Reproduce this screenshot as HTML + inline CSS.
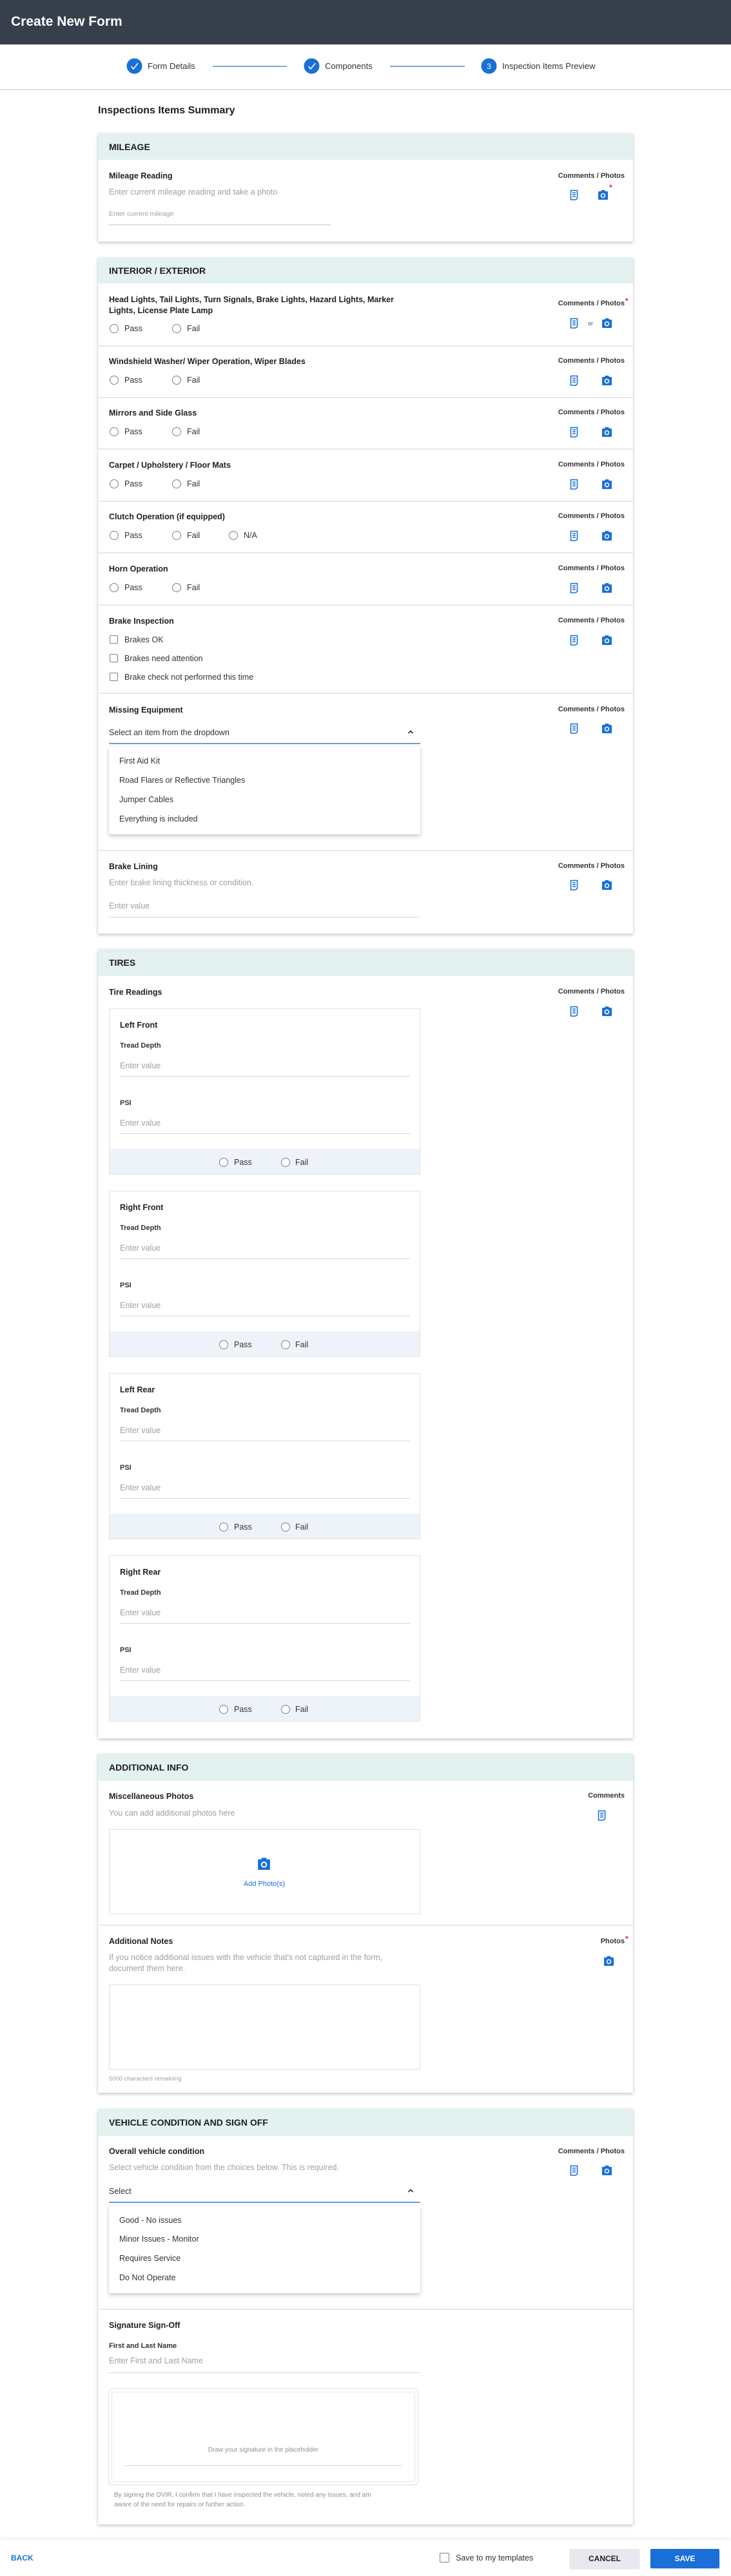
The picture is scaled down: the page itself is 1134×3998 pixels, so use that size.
<!DOCTYPE html>
<html><head><meta charset="utf-8">
<style>
*{box-sizing:border-box;margin:0;padding:0}
body{width:1134px;height:3998px;position:relative;background:#fff;font-family:"Liberation Sans",Arial,sans-serif;color:#222;overflow:hidden}
.a{position:absolute;white-space:nowrap;line-height:16px}
.hdr{position:absolute;left:0;top:0;width:1134px;height:69px;background:#373e4c}
.card{position:absolute;left:152px;width:830px;background:#fff;box-shadow:0 2px 5px rgba(0,0,0,.22),0 0 2px rgba(0,0,0,.08)}
.band{position:absolute;left:0;top:0;width:100%;height:41px;background:#e4f1f1}
.st{font-size:14px;font-weight:bold;color:#1d1d1d}
.t{font-size:12.5px;font-weight:bold;color:#1f1f1f}
.d{font-size:12.5px;color:#9ba1aa}
.ph{font-size:12.5px;color:#9ba1aa}
.cp{font-size:11px;font-weight:bold;color:#333;right:165px;text-align:right}
.lbl{font-size:12.5px;color:#333}
.sep{position:absolute;left:152px;width:830px;height:2px;background:#e6e8ec}
.ul{position:absolute;height:1px;background:#d5d8de}
.rad{position:absolute;width:14px;height:14px;border:1.4px solid #7b7f86;border-radius:50%;background:#fff}
.chk{position:absolute;width:13px;height:13px;border:1.4px solid #7b7f86;border-radius:2px;background:#fff}
.ico{position:absolute}
.menu{position:absolute;left:169px;width:483px;background:#fff;box-shadow:0 3px 6px rgba(0,0,0,.2),0 0 2px rgba(0,0,0,.1)}
.tire{position:absolute;left:169px;width:483px;height:258px;border:1px solid #dfe2e6;background:#fff}
.tband{position:absolute;left:0;bottom:0;width:100%;height:39px;background:#eef3f9}
.req{color:#e02020;font-weight:bold}
</style></head><body>

<div class="hdr"></div>
<div class="a" style="left:17px;top:22px;font-size:21px;line-height:24px;font-weight:bold;color:#fff">Create New Form</div>

<!-- stepper -->
<svg class="ico" style="left:196px;top:90px" width="25" height="25"><circle cx="12.5" cy="12.5" r="12" fill="#1a6fd8"/><path d="M7.5 13l3.5 4 7-9" fill="none" stroke="#fff" stroke-width="1.6"/></svg>
<div class="a" style="left:229px;top:95px;font-size:13px;color:#333">Form Details</div>
<div style="position:absolute;left:330px;top:102px;width:115px;height:2px;background:#8aa6cc"></div>
<svg class="ico" style="left:471px;top:90px" width="25" height="25"><circle cx="12.5" cy="12.5" r="12" fill="#1a6fd8"/><path d="M7.5 13l3.5 4 7-9" fill="none" stroke="#fff" stroke-width="1.6"/></svg>
<div class="a" style="left:504px;top:95px;font-size:13px;color:#333">Components</div>
<div style="position:absolute;left:605px;top:102px;width:116px;height:2px;background:#8aa6cc"></div>
<svg class="ico" style="left:746px;top:90px" width="25" height="25"><circle cx="12.5" cy="12.5" r="12" fill="#1a6fd8"/><text x="12.5" y="17" font-size="12" fill="#fff" text-anchor="middle" font-family="Liberation Sans">3</text></svg>
<div class="a" style="left:779px;top:95px;font-size:13px;color:#333">Inspection Items Preview</div>
<div style="position:absolute;left:0;top:138px;width:1134px;height:2px;background:#e3e5e8"></div>

<div class="a" style="left:152px;top:162px;font-size:16px;line-height:20px;font-weight:bold;color:#1d1d1d">Inspections Items Summary</div>

<!-- MILEAGE -->
<div class="card" style="top:207px;height:168px"><div class="band"></div></div>
<div class="a st" style="left:169px;top:220px">MILEAGE</div>
<div class="a t" style="left:169px;top:265px">Mileage Reading</div>
<div class="a d" style="left:169px;top:290px">Enter current mileage reading and take a photo</div>
<div class="a ph" style="left:169px;top:324px;font-size:10.5px">Enter current mileage</div>
<div class="ul" style="left:168px;top:348px;width:345px;height:2px;background:#dfe1e5"></div>
<div class="a cp" style="top:265px">Comments / Photos</div>
<svg class="ico" style="left:884px;top:294px" width="13" height="17" viewBox="0 0 13 17"><path d="M1.5 1.5h10v12.5l-2.5 2h-7.5z" fill="none" stroke="#1a6fd8" stroke-width="1.6"/><path d="M4 5h5M4 8h5M4 11h5" stroke="#1a6fd8" stroke-width="1.4"/></svg>
<svg class="ico" style="left:928px;top:294px" width="15" height="16" viewBox="0 0 15 16"><path d="M5 1h5l1 2h3a1 1 0 0 1 1 1v11a1 1 0 0 1-1 1H1a1 1 0 0 1-1-1V4a1 1 0 0 1 1-1h3z" fill="#1a6fd8"/><circle cx="7.5" cy="9.5" r="3" fill="none" stroke="#fff" stroke-width="1.6"/></svg>
<div class="a req" style="left:945px;top:283px;font-size:12px">*</div>

<!-- INTERIOR / EXTERIOR -->
<div class="card" style="top:400px;height:1049px"><div class="band" style="height:40px"></div></div>
<div class="a st" style="left:169px;top:412px">INTERIOR / EXTERIOR</div>

<!-- row1 -->
<div class="a t" style="left:169px;top:457px;line-height:17px">Head Lights, Tail Lights, Turn Signals, Brake Lights, Hazard Lights, Marker<br>Lights, License Plate Lamp</div>
<div class="rad" style="left:170px;top:503px"></div><div class="a lbl" style="left:193px;top:502px">Pass</div>
<div class="rad" style="left:267px;top:503px"></div><div class="a lbl" style="left:290px;top:502px">Fail</div>
<div class="a cp" style="top:463px">Comments / Photos</div><div class="a req" style="left:970px;top:459px;font-size:12px">*</div>
<svg class="ico" style="left:884px;top:493px" width="13" height="17" viewBox="0 0 13 17"><path d="M1.5 1.5h10v12.5l-2.5 2h-7.5z" fill="none" stroke="#1a6fd8" stroke-width="1.6"/><path d="M4 5h5M4 8h5M4 11h5" stroke="#1a6fd8" stroke-width="1.4"/></svg>
<div class="a" style="left:912px;top:494px;font-size:9px;color:#555">or</div>
<svg class="ico" style="left:934px;top:493px" width="15" height="16" viewBox="0 0 15 16"><path d="M5 1h5l1 2h3a1 1 0 0 1 1 1v11a1 1 0 0 1-1 1H1a1 1 0 0 1-1-1V4a1 1 0 0 1 1-1h3z" fill="#1a6fd8"/><circle cx="7.5" cy="9.5" r="3" fill="none" stroke="#fff" stroke-width="1.6"/></svg>
<div class="sep" style="top:536px"></div>

<!-- generic rows -->
<div class="a t" style="left:169px;top:553px">Windshield Washer/ Wiper Operation, Wiper Blades</div>
<div class="rad" style="left:170px;top:583px"></div><div class="a lbl" style="left:193px;top:582px">Pass</div>
<div class="rad" style="left:267px;top:583px"></div><div class="a lbl" style="left:290px;top:582px">Fail</div>
<div class="a cp" style="top:552px">Comments / Photos</div>
<svg class="ico" style="left:884px;top:582px" width="13" height="17" viewBox="0 0 13 17"><path d="M1.5 1.5h10v12.5l-2.5 2h-7.5z" fill="none" stroke="#1a6fd8" stroke-width="1.6"/><path d="M4 5h5M4 8h5M4 11h5" stroke="#1a6fd8" stroke-width="1.4"/></svg>
<svg class="ico" style="left:934px;top:582px" width="15" height="16" viewBox="0 0 15 16"><path d="M5 1h5l1 2h3a1 1 0 0 1 1 1v11a1 1 0 0 1-1 1H1a1 1 0 0 1-1-1V4a1 1 0 0 1 1-1h3z" fill="#1a6fd8"/><circle cx="7.5" cy="9.5" r="3" fill="none" stroke="#fff" stroke-width="1.6"/></svg>
<div class="sep" style="top:616px"></div>

<div class="a t" style="left:169px;top:633px">Mirrors and Side Glass</div>
<div class="rad" style="left:170px;top:663px"></div><div class="a lbl" style="left:193px;top:662px">Pass</div>
<div class="rad" style="left:267px;top:663px"></div><div class="a lbl" style="left:290px;top:662px">Fail</div>
<div class="a cp" style="top:632px">Comments / Photos</div>
<svg class="ico" style="left:884px;top:662px" width="13" height="17" viewBox="0 0 13 17"><path d="M1.5 1.5h10v12.5l-2.5 2h-7.5z" fill="none" stroke="#1a6fd8" stroke-width="1.6"/><path d="M4 5h5M4 8h5M4 11h5" stroke="#1a6fd8" stroke-width="1.4"/></svg>
<svg class="ico" style="left:934px;top:662px" width="15" height="16" viewBox="0 0 15 16"><path d="M5 1h5l1 2h3a1 1 0 0 1 1 1v11a1 1 0 0 1-1 1H1a1 1 0 0 1-1-1V4a1 1 0 0 1 1-1h3z" fill="#1a6fd8"/><circle cx="7.5" cy="9.5" r="3" fill="none" stroke="#fff" stroke-width="1.6"/></svg>
<div class="sep" style="top:696px"></div>

<div class="a t" style="left:169px;top:714px">Carpet / Upholstery / Floor Mats</div>
<div class="rad" style="left:170px;top:744px"></div><div class="a lbl" style="left:193px;top:743px">Pass</div>
<div class="rad" style="left:267px;top:744px"></div><div class="a lbl" style="left:290px;top:743px">Fail</div>
<div class="a cp" style="top:713px">Comments / Photos</div>
<svg class="ico" style="left:884px;top:743px" width="13" height="17" viewBox="0 0 13 17"><path d="M1.5 1.5h10v12.5l-2.5 2h-7.5z" fill="none" stroke="#1a6fd8" stroke-width="1.6"/><path d="M4 5h5M4 8h5M4 11h5" stroke="#1a6fd8" stroke-width="1.4"/></svg>
<svg class="ico" style="left:934px;top:743px" width="15" height="16" viewBox="0 0 15 16"><path d="M5 1h5l1 2h3a1 1 0 0 1 1 1v11a1 1 0 0 1-1 1H1a1 1 0 0 1-1-1V4a1 1 0 0 1 1-1h3z" fill="#1a6fd8"/><circle cx="7.5" cy="9.5" r="3" fill="none" stroke="#fff" stroke-width="1.6"/></svg>
<div class="sep" style="top:777px"></div>

<div class="a t" style="left:169px;top:794px">Clutch Operation (if equipped)</div>
<div class="rad" style="left:170px;top:824px"></div><div class="a lbl" style="left:193px;top:823px">Pass</div>
<div class="rad" style="left:267px;top:824px"></div><div class="a lbl" style="left:290px;top:823px">Fail</div>
<div class="rad" style="left:355px;top:824px"></div><div class="a lbl" style="left:378px;top:823px">N/A</div>
<div class="a cp" style="top:793px">Comments / Photos</div>
<svg class="ico" style="left:884px;top:823px" width="13" height="17" viewBox="0 0 13 17"><path d="M1.5 1.5h10v12.5l-2.5 2h-7.5z" fill="none" stroke="#1a6fd8" stroke-width="1.6"/><path d="M4 5h5M4 8h5M4 11h5" stroke="#1a6fd8" stroke-width="1.4"/></svg>
<svg class="ico" style="left:934px;top:823px" width="15" height="16" viewBox="0 0 15 16"><path d="M5 1h5l1 2h3a1 1 0 0 1 1 1v11a1 1 0 0 1-1 1H1a1 1 0 0 1-1-1V4a1 1 0 0 1 1-1h3z" fill="#1a6fd8"/><circle cx="7.5" cy="9.5" r="3" fill="none" stroke="#fff" stroke-width="1.6"/></svg>
<div class="sep" style="top:857px"></div>

<div class="a t" style="left:169px;top:875px">Horn Operation</div>
<div class="rad" style="left:170px;top:905px"></div><div class="a lbl" style="left:193px;top:904px">Pass</div>
<div class="rad" style="left:267px;top:905px"></div><div class="a lbl" style="left:290px;top:904px">Fail</div>
<div class="a cp" style="top:874px">Comments / Photos</div>
<svg class="ico" style="left:884px;top:904px" width="13" height="17" viewBox="0 0 13 17"><path d="M1.5 1.5h10v12.5l-2.5 2h-7.5z" fill="none" stroke="#1a6fd8" stroke-width="1.6"/><path d="M4 5h5M4 8h5M4 11h5" stroke="#1a6fd8" stroke-width="1.4"/></svg>
<svg class="ico" style="left:934px;top:904px" width="15" height="16" viewBox="0 0 15 16"><path d="M5 1h5l1 2h3a1 1 0 0 1 1 1v11a1 1 0 0 1-1 1H1a1 1 0 0 1-1-1V4a1 1 0 0 1 1-1h3z" fill="#1a6fd8"/><circle cx="7.5" cy="9.5" r="3" fill="none" stroke="#fff" stroke-width="1.6"/></svg>
<div class="sep" style="top:938px"></div>

<!-- brake inspection -->
<div class="a t" style="left:169px;top:956px">Brake Inspection</div>
<div class="chk" style="left:170px;top:986px"></div><div class="a lbl" style="left:193px;top:985px">Brakes OK</div>
<div class="chk" style="left:170px;top:1015px"></div><div class="a lbl" style="left:193px;top:1014px">Brakes need attention</div>
<div class="chk" style="left:170px;top:1044px"></div><div class="a lbl" style="left:193px;top:1043px">Brake check not performed this time</div>
<div class="a cp" style="top:955px">Comments / Photos</div>
<svg class="ico" style="left:884px;top:985px" width="13" height="17" viewBox="0 0 13 17"><path d="M1.5 1.5h10v12.5l-2.5 2h-7.5z" fill="none" stroke="#1a6fd8" stroke-width="1.6"/><path d="M4 5h5M4 8h5M4 11h5" stroke="#1a6fd8" stroke-width="1.4"/></svg>
<svg class="ico" style="left:934px;top:985px" width="15" height="16" viewBox="0 0 15 16"><path d="M5 1h5l1 2h3a1 1 0 0 1 1 1v11a1 1 0 0 1-1 1H1a1 1 0 0 1-1-1V4a1 1 0 0 1 1-1h3z" fill="#1a6fd8"/><circle cx="7.5" cy="9.5" r="3" fill="none" stroke="#fff" stroke-width="1.6"/></svg>
<div class="sep" style="top:1075px"></div>

<!-- missing equipment -->
<div class="a t" style="left:169px;top:1094px">Missing Equipment</div>
<div class="a lbl" style="left:169px;top:1129px">Select an item from the dropdown</div>
<svg class="ico" style="left:632px;top:1132px" width="10" height="8"><path d="M1.5 6l3.5-3.5 3.5 3.5" fill="none" stroke="#222" stroke-width="1.6"/></svg>
<div class="ul" style="left:169px;top:1153px;width:483px;height:2px;background:#6f9ad6"></div>
<div class="menu" style="top:1159px;height:136px"></div>
<div class="a lbl" style="left:185px;top:1173px">First Aid Kit</div>
<div class="a lbl" style="left:185px;top:1203px">Road Flares or Reflective Triangles</div>
<div class="a lbl" style="left:185px;top:1233px">Jumper Cables</div>
<div class="a lbl" style="left:185px;top:1263px">Everything is included</div>
<div class="a cp" style="top:1093px">Comments / Photos</div>
<svg class="ico" style="left:884px;top:1122px" width="13" height="17" viewBox="0 0 13 17"><path d="M1.5 1.5h10v12.5l-2.5 2h-7.5z" fill="none" stroke="#1a6fd8" stroke-width="1.6"/><path d="M4 5h5M4 8h5M4 11h5" stroke="#1a6fd8" stroke-width="1.4"/></svg>
<svg class="ico" style="left:934px;top:1122px" width="15" height="16" viewBox="0 0 15 16"><path d="M5 1h5l1 2h3a1 1 0 0 1 1 1v11a1 1 0 0 1-1 1H1a1 1 0 0 1-1-1V4a1 1 0 0 1 1-1h3z" fill="#1a6fd8"/><circle cx="7.5" cy="9.5" r="3" fill="none" stroke="#fff" stroke-width="1.6"/></svg>
<div class="sep" style="top:1319px"></div>

<!-- brake lining -->
<div class="a t" style="left:169px;top:1337px">Brake Lining</div>
<div class="a d" style="left:169px;top:1362px">Enter brake lining thickness or condition.</div>
<div class="a ph" style="left:169px;top:1398px">Enter value</div>
<div class="ul" style="left:169px;top:1423px;width:483px"></div>
<div class="a cp" style="top:1336px">Comments / Photos</div>
<svg class="ico" style="left:884px;top:1365px" width="13" height="17" viewBox="0 0 13 17"><path d="M1.5 1.5h10v12.5l-2.5 2h-7.5z" fill="none" stroke="#1a6fd8" stroke-width="1.6"/><path d="M4 5h5M4 8h5M4 11h5" stroke="#1a6fd8" stroke-width="1.4"/></svg>
<svg class="ico" style="left:934px;top:1365px" width="15" height="16" viewBox="0 0 15 16"><path d="M5 1h5l1 2h3a1 1 0 0 1 1 1v11a1 1 0 0 1-1 1H1a1 1 0 0 1-1-1V4a1 1 0 0 1 1-1h3z" fill="#1a6fd8"/><circle cx="7.5" cy="9.5" r="3" fill="none" stroke="#fff" stroke-width="1.6"/></svg>

<!-- TIRES -->
<div class="card" style="top:1473px;height:1225px"><div class="band" style="height:42px"></div></div>
<div class="a st" style="left:169px;top:1486px">TIRES</div>
<div class="a t" style="left:169px;top:1532px">Tire Readings</div>
<div class="a cp" style="top:1531px">Comments / Photos</div>
<svg class="ico" style="left:884px;top:1561px" width="13" height="17" viewBox="0 0 13 17"><path d="M1.5 1.5h10v12.5l-2.5 2h-7.5z" fill="none" stroke="#1a6fd8" stroke-width="1.6"/><path d="M4 5h5M4 8h5M4 11h5" stroke="#1a6fd8" stroke-width="1.4"/></svg>
<svg class="ico" style="left:934px;top:1561px" width="15" height="16" viewBox="0 0 15 16"><path d="M5 1h5l1 2h3a1 1 0 0 1 1 1v11a1 1 0 0 1-1 1H1a1 1 0 0 1-1-1V4a1 1 0 0 1 1-1h3z" fill="#1a6fd8"/><circle cx="7.5" cy="9.5" r="3" fill="none" stroke="#fff" stroke-width="1.6"/></svg>

<div class="tire" style="top:1565px"><div class="tband"></div>
<div class="a t" style="left:16px;top:17px">Left Front</div>
<div class="a" style="left:16px;top:49px;font-size:11px;font-weight:bold;color:#333">Tread Depth</div>
<div class="a ph" style="left:16px;top:80px">Enter value</div>
<div class="ul" style="left:16px;top:104px;width:450px"></div>
<div class="a" style="left:16px;top:138px;font-size:11px;font-weight:bold;color:#333">PSI</div>
<div class="a ph" style="left:16px;top:169px">Enter value</div>
<div class="ul" style="left:16px;top:193px;width:450px"></div>
<div class="rad" style="left:170px;top:231px"></div><div class="a lbl" style="left:193px;top:230px">Pass</div>
<div class="rad" style="left:266px;top:231px"></div><div class="a lbl" style="left:288px;top:230px">Fail</div>
</div>
<div class="tire" style="top:1848px"><div class="tband"></div>
<div class="a t" style="left:16px;top:17px">Right Front</div>
<div class="a" style="left:16px;top:49px;font-size:11px;font-weight:bold;color:#333">Tread Depth</div>
<div class="a ph" style="left:16px;top:80px">Enter value</div>
<div class="ul" style="left:16px;top:104px;width:450px"></div>
<div class="a" style="left:16px;top:138px;font-size:11px;font-weight:bold;color:#333">PSI</div>
<div class="a ph" style="left:16px;top:169px">Enter value</div>
<div class="ul" style="left:16px;top:193px;width:450px"></div>
<div class="rad" style="left:170px;top:231px"></div><div class="a lbl" style="left:193px;top:230px">Pass</div>
<div class="rad" style="left:266px;top:231px"></div><div class="a lbl" style="left:288px;top:230px">Fail</div>
</div>
<div class="tire" style="top:2131px"><div class="tband"></div>
<div class="a t" style="left:16px;top:17px">Left Rear</div>
<div class="a" style="left:16px;top:49px;font-size:11px;font-weight:bold;color:#333">Tread Depth</div>
<div class="a ph" style="left:16px;top:80px">Enter value</div>
<div class="ul" style="left:16px;top:104px;width:450px"></div>
<div class="a" style="left:16px;top:138px;font-size:11px;font-weight:bold;color:#333">PSI</div>
<div class="a ph" style="left:16px;top:169px">Enter value</div>
<div class="ul" style="left:16px;top:193px;width:450px"></div>
<div class="rad" style="left:170px;top:231px"></div><div class="a lbl" style="left:193px;top:230px">Pass</div>
<div class="rad" style="left:266px;top:231px"></div><div class="a lbl" style="left:288px;top:230px">Fail</div>
</div>
<div class="tire" style="top:2414px"><div class="tband"></div>
<div class="a t" style="left:16px;top:17px">Right Rear</div>
<div class="a" style="left:16px;top:49px;font-size:11px;font-weight:bold;color:#333">Tread Depth</div>
<div class="a ph" style="left:16px;top:80px">Enter value</div>
<div class="ul" style="left:16px;top:104px;width:450px"></div>
<div class="a" style="left:16px;top:138px;font-size:11px;font-weight:bold;color:#333">PSI</div>
<div class="a ph" style="left:16px;top:169px">Enter value</div>
<div class="ul" style="left:16px;top:193px;width:450px"></div>
<div class="rad" style="left:170px;top:231px"></div><div class="a lbl" style="left:193px;top:230px">Pass</div>
<div class="rad" style="left:266px;top:231px"></div><div class="a lbl" style="left:288px;top:230px">Fail</div>
</div>

<!-- ADDITIONAL INFO -->
<div class="card" style="top:2722px;height:526px"><div class="band" style="height:42px"></div></div>
<div class="a st" style="left:169px;top:2735px">ADDITIONAL INFO</div>
<div class="a t" style="left:169px;top:2780px">Miscellaneous Photos</div>
<div class="a d" style="left:169px;top:2806px">You can add additional photos here</div>
<div style="position:absolute;left:169px;top:2839px;width:483px;height:132px;border:1px solid #dcdfe3;border-radius:2px"></div>
<svg class="ico" style="left:400px;top:2882px" width="19" height="20" viewBox="0 0 15 16"><path d="M5 1h5l1 2h3a1 1 0 0 1 1 1v11a1 1 0 0 1-1 1H1a1 1 0 0 1-1-1V4a1 1 0 0 1 1-1h3z" fill="#1a6fd8"/><circle cx="7.5" cy="9.5" r="3" fill="none" stroke="#fff" stroke-width="1.6"/></svg>
<div class="a" style="left:376px;top:2916px;font-size:11px;color:#1a6fd8;width:68px;text-align:center">Add Photo(s)</div>
<div class="a cp" style="top:2779px">Comments</div>
<svg class="ico" style="left:927px;top:2809px" width="13" height="17" viewBox="0 0 13 17"><path d="M1.5 1.5h10v12.5l-2.5 2h-7.5z" fill="none" stroke="#1a6fd8" stroke-width="1.6"/><path d="M4 5h5M4 8h5M4 11h5" stroke="#1a6fd8" stroke-width="1.4"/></svg>
<div class="sep" style="top:2987px"></div>
<div class="a t" style="left:169px;top:3005px">Additional Notes</div>
<div class="a d" style="left:169px;top:3030px;line-height:17px">If you notice additional issues with the vehicle that's not captured in the form,<br>document them here.</div>
<div style="position:absolute;left:169px;top:3080px;width:483px;height:132px;border:1px solid #dcdfe3;border-radius:2px"></div>
<div class="a" style="left:169px;top:3219px;font-size:9.5px;color:#9ba1aa">5000 characters remaining</div>
<div class="a cp" style="top:3005px">Photos</div><div class="a req" style="left:970px;top:3001px;font-size:12px">*</div>
<svg class="ico" style="left:937px;top:3035px" width="15" height="16" viewBox="0 0 15 16"><path d="M5 1h5l1 2h3a1 1 0 0 1 1 1v11a1 1 0 0 1-1 1H1a1 1 0 0 1-1-1V4a1 1 0 0 1 1-1h3z" fill="#1a6fd8"/><circle cx="7.5" cy="9.5" r="3" fill="none" stroke="#fff" stroke-width="1.6"/></svg>

<!-- VEHICLE CONDITION -->
<div class="card" style="top:3273px;height:645px"><div class="band" style="height:42px"></div></div>
<div class="a st" style="left:169px;top:3286px">VEHICLE CONDITION AND SIGN OFF</div>
<div class="a t" style="left:169px;top:3331px">Overall vehicle condition</div>
<div class="a d" style="left:169px;top:3356px">Select vehicle condition from the choices below. This is required.</div>
<div class="a lbl" style="left:169px;top:3393px">Select</div>
<svg class="ico" style="left:632px;top:3396px" width="10" height="8"><path d="M1.5 6l3.5-3.5 3.5 3.5" fill="none" stroke="#222" stroke-width="1.6"/></svg>
<div class="ul" style="left:169px;top:3417px;width:483px;height:2px;background:#6f9ad6"></div>
<div class="menu" style="top:3423px;height:136px"></div>
<div class="a lbl" style="left:185px;top:3438px">Good - No issues</div>
<div class="a lbl" style="left:185px;top:3467px">Minor Issues - Monitor</div>
<div class="a lbl" style="left:185px;top:3497px">Requires Service</div>
<div class="a lbl" style="left:185px;top:3527px">Do Not Operate</div>
<div class="a cp" style="top:3331px">Comments / Photos</div>
<svg class="ico" style="left:884px;top:3360px" width="13" height="17" viewBox="0 0 13 17"><path d="M1.5 1.5h10v12.5l-2.5 2h-7.5z" fill="none" stroke="#1a6fd8" stroke-width="1.6"/><path d="M4 5h5M4 8h5M4 11h5" stroke="#1a6fd8" stroke-width="1.4"/></svg>
<svg class="ico" style="left:934px;top:3360px" width="15" height="16" viewBox="0 0 15 16"><path d="M5 1h5l1 2h3a1 1 0 0 1 1 1v11a1 1 0 0 1-1 1H1a1 1 0 0 1-1-1V4a1 1 0 0 1 1-1h3z" fill="#1a6fd8"/><circle cx="7.5" cy="9.5" r="3" fill="none" stroke="#fff" stroke-width="1.6"/></svg>
<div class="sep" style="top:3583px"></div>
<div class="a t" style="left:169px;top:3601px">Signature Sign-Off</div>
<div class="a" style="left:169px;top:3633px;font-size:11px;font-weight:bold;color:#333">First and Last Name</div>
<div class="a ph" style="left:169px;top:3656px">Enter First and Last Name</div>
<div class="ul" style="left:169px;top:3682px;width:483px"></div>
<div style="position:absolute;left:168px;top:3707px;width:481px;height:150px;border:1px solid #dcdfe3;border-radius:6px"></div>
<div style="position:absolute;left:173px;top:3712px;width:471px;height:140px;border:1px solid #e1e3e7;border-radius:4px"></div>
<div class="a" style="left:168px;top:3795px;width:481px;text-align:center;font-size:10px;color:#8a909a">Draw your signature in the placeholder</div>
<div class="ul" style="left:194px;top:3826px;width:429px"></div>
<div class="a" style="left:177px;top:3865px;font-size:10px;line-height:15px;color:#8a909a">By signing the DVIR, I confirm that I have inspected the vehicle, noted any issues, and am<br>aware of the need for repairs or further action.</div>

<!-- FOOTER -->
<div style="position:absolute;left:0;top:3942px;width:1134px;height:56px;background:#fff;box-shadow:0 -3px 6px rgba(0,0,0,.07)"></div>
<div class="a" style="left:17px;top:3962px;font-size:12px;font-weight:bold;color:#1a6fd8">BACK</div>
<div class="chk" style="left:682px;top:3962px;width:15px;height:15px"></div>
<div class="a" style="left:707px;top:3962px;font-size:12.5px;color:#333">Save to my templates</div>
<div style="position:absolute;left:884px;top:3956px;width:108px;height:30px;background:#e7e9ee;border-radius:2px;box-shadow:0 1px 2px rgba(0,0,0,.15)"></div>
<div class="a" style="left:884px;top:3963px;width:108px;text-align:center;font-size:12px;font-weight:bold;color:#222">CANCEL</div>
<div style="position:absolute;left:1009px;top:3956px;width:107px;height:30px;background:#1a6fd8;border-radius:2px;box-shadow:0 1px 2px rgba(0,0,0,.2)"></div>
<div class="a" style="left:1009px;top:3963px;width:107px;text-align:center;font-size:12px;font-weight:bold;color:#fff">SAVE</div>

</body></html>
